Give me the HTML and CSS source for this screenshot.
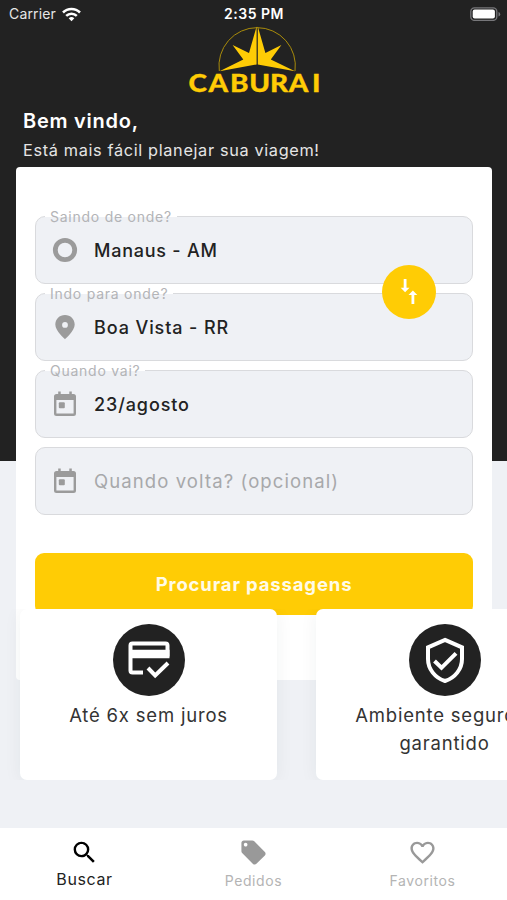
FILE: index.html
```html
<!DOCTYPE html>
<html lang="pt-BR">
<head>
<meta charset="utf-8">
<meta name="viewport" content="width=device-width, initial-scale=1">
<title>Caburai</title>
<link rel="stylesheet" href="styles.css">
</head>
<body>
<div class="app">
  <header class="hero">
    <div class="status">
      <div class="carrier"><span>Carrier</span>
        <svg width="19" height="15" viewBox="0 0 19 15" fill="#fff"><path d="M9.5 14.2 6.7 11.3a4 4 0 0 1 5.600 0z"/><g fill="none" stroke="#fff" stroke-width="2.500"><path d="M4.200 8.900a7.500 7.500 0 0 1 10.600 0"/><path d="M1 5.500a12 12 0 0 1 17 0"/></g></svg>
      </div>
      <div class="clock">2:35 PM</div>
      <svg class="battery" width="31" height="14" viewBox="0 0 31 14"><rect x=".8" y=".8" width="26" height="12.600" rx="3.600" fill="#222" stroke="#77777a" stroke-width="1.300"/><rect x="2.700" y="2.600" width="22.200" height="9" rx="2" fill="#fff"/><path d="M28.500 5v4.400q1.700-.5 1.700-2.200T28.500 5z" fill="#77777a"/></svg>
    </div>
    <svg class="logo" width="140" height="72" viewBox="184 24 140 72">
      <path d="M219.300 71A38.200 38.200 0 1 1 295 71" fill="none" stroke="#a88b0b" stroke-width="1"/>
      <path d="M256.600 26.500 249 53 232.600 45 243.300 59.500 219.500 71.200 256.600 64.500zM257.800 26.500 265.400 53 281.400 45 270.800 59.500 295 71.200 257.800 64.500z" fill="#ffcc05"/>
      <text class="wordmark" transform="translate(188.500 91.900) scale(1.140 1)" x="0 17.600 36.300 53.400 71.500 88 108.300">CABURAI</text>
    </svg>
    <h1 class="hello">Bem vindo,</h1>
    <p class="tagline">Está mais fácil planejar sua viagem!</p>
  </header>

  <main class="content">
    <section class="search">
      <div class="field">
        <span class="label">Saindo de onde?</span>
        <svg class="icon" viewBox="0 0 28 28"><circle cx="14" cy="14" r="9.700" fill="none" stroke="#9b9b9b" stroke-width="4.800"/></svg>
        <span class="value manaus">Manaus - AM</span>
        <button class="swap" aria-label="Inverter">
          <svg width="20" height="28" viewBox="0 0 20 28" fill="#fff"><path d="M4.700 1h2.800v8.800h3L6.100 14.200 1.700 9.800h3zM12.500 26h2.800v-9h3L13.900 12.600 9.500 17h3z"/></svg>
        </button>
      </div>
      <div class="field">
        <span class="label">Indo para onde?</span>
        <svg class="icon" viewBox="0 0 28 28"><path fill="#9b9b9b" fill-rule="evenodd" d="M14 2C8.500 2 4.300 6.200 4.300 11.600c0 6.700 9.700 14.600 9.700 14.600s9.700-7.900 9.700-14.600C23.700 6.200 19.500 2 14 2zm0 7a2.900 2.900 0 1 1 0 5.800A2.900 2.900 0 0 1 14 9z"/></svg>
        <span class="value">Boa Vista - RR</span>
      </div>
      <div class="field">
        <span class="label">Quando vai?</span>
        <svg class="icon" viewBox="0 0 28 28"><path class="calendar" fill-rule="evenodd" d="M7.200 1.500h2.500V4h8.600V1.500h2.500V4H22.500A2.500 2.500 0 0 1 25 6.500v17A2.500 2.500 0 0 1 22.500 26h-17A2.500 2.500 0 0 1 3 23.500v-17A2.500 2.500 0 0 1 5.500 4h1.700zM5.400 10v13.600h17.200V10z"/><rect class="calendar" x="7.800" y="12.300" width="6" height="6" rx="1"/></svg>
        <span class="value">23/agosto</span>
      </div>
      <div class="field">
        <svg class="icon" viewBox="0 0 28 28"><path class="calendar" fill-rule="evenodd" d="M7.200 1.500h2.500V4h8.600V1.500h2.500V4H22.500A2.500 2.500 0 0 1 25 6.500v17A2.500 2.500 0 0 1 22.500 26h-17A2.500 2.500 0 0 1 3 23.500v-17A2.500 2.500 0 0 1 5.500 4h1.700zM5.400 10v13.600h17.200V10z"/><rect class="calendar" x="7.800" y="12.300" width="6" height="6" rx="1"/></svg>
        <span class="value placeholder">Quando volta? (opcional)</span>
      </div>
      <button class="submit">Procurar passagens</button>
    </section>

    <section class="benefits">
      <article class="benefit">
        <svg class="badge" viewBox="0 0 72 72"><circle cx="36" cy="36" r="36" fill="#222"/><g fill="none" stroke="#fff" stroke-width="4"><path d="M54.500 32.500V21.500q0-2-2-2H19.500q-2 0-2 2V46.500q0 2 2 2H30"/><path d="M35 44l7.200 7.500L55 39"/></g><path d="M17 25.700h39.500v8.500H17z" fill="#fff"/></svg>
        <p>Até 6x sem juros</p>
      </article>
      <article class="benefit">
        <svg class="badge" viewBox="0 0 72 72"><circle cx="36" cy="36" r="36" fill="#222"/><g fill="none" stroke="#fff" stroke-width="4"><path d="M36 15.900 53 23.300V35c0 10-7 19-17 22C26 54 19 45 19 35V23.300z"/><path d="M25.500 37l7 6.800L47 29.300"/></g></svg>
        <p>Ambiente seguro e garantido</p>
      </article>
    </section>
  </main>

  <nav class="tabs">
    <a class="tab active"><svg viewBox="0 0 24 24"><path d="M15.500 14h-.79l-.28-.27A6.470 6.470 0 0 0 16 9.500 6.500 6.500 0 1 0 9.500 16c1.610 0 3.090-.59 4.230-1.570l.27.28v.79l5 4.990L20.490 19l-4.990-5zm-6 0C7.010 14 5 11.990 5 9.500S7.010 5 9.500 5 14 7.010 14 9.500 11.990 14 9.500 14z"/></svg><span>Buscar</span></a>
    <a class="tab"><svg viewBox="0 0 24 24"><path d="M21.410 11.580l-9-9C12.050 2.220 11.550 2 11 2H4c-1.100 0-2 .9-2 2v7c0 .55.220 1.050.590 1.420l9 9c.360.360.860.580 1.410.580s1.050-.220 1.410-.590l7-7c.370-.360.590-.860.590-1.410s-.230-1.060-.590-1.420zM5.500 7C4.670 7 4 6.330 4 5.500S4.670 4 5.500 4 7 4.670 7 5.500 6.330 7 5.500 7z"/></svg><span>Pedidos</span></a>
    <a class="tab"><svg viewBox="0 0 24 24"><path d="M16.500 3c-1.740 0-3.410.81-4.500 2.090C10.910 3.810 9.240 3 7.500 3 4.420 3 2 5.420 2 8.500c0 3.780 3.400 6.860 8.550 11.540L12 21.350l1.450-1.320C18.600 15.360 22 12.280 22 8.500 22 5.420 19.580 3 16.500 3zm-4.400 15.550l-.1.100-.1-.100C7.140 14.240 4 11.390 4 8.500 4 6.500 5.500 5 7.500 5c1.540 0 3.040.99 3.570 2.360h1.870C13.460 5.990 14.960 5 16.500 5c2 0 3.500 1.500 3.500 3.500 0 2.890-3.140 5.740-7.900 10.050z"/></svg><span>Favoritos</span></a>
  </nav>
</div>
</body>
</html>
```
FILE: styles.css
```css
* { box-sizing: border-box; }
body { margin: 0; font-family: Inter, "Liberation Sans", sans-serif; background: #eff1f5; }
h1, p { margin: 0; white-space: nowrap; }
button { border: 0; padding: 0; font-family: inherit; }
svg { display: block; flex: none; }

.app { height: 900px; width: 507px; overflow: hidden; display: flex; flex-direction: column; }

.hero { height: 461px; flex: none; background: #222; color: #fff; }
.status { display: grid; grid-template-columns: 1fr auto 1fr; align-items: center; height: 24px; padding: 4px 6px 0 9px; font-size: 14px; line-height: 20px; }
.carrier { display: flex; align-items: center; gap: 6px; color: #e6e6e6; letter-spacing: .15px; }
.clock { font-weight: 600; font-size: 14px; letter-spacing: .5px; margin-right: 2px; }
.battery { justify-self: end; }
.logo { margin-left: 184px; }
.wordmark { font: 900 24.5px Lato, sans-serif; fill: #ffcc05; stroke: #ffcc05; stroke-width: .3px; stroke-linejoin: round; }
.hello { margin: 12px 0 0 23px; font-size: 20px; line-height: 26px; font-weight: 600; letter-spacing: .75px; }
.tagline { margin: 4px 0 0 23px; font-size: 16.3px; line-height: 24px; color: #e5e5e5; letter-spacing: .65px; }

.content { margin-top: -294px; flex: none; height: 661px; }
.search { margin: 0 15px 0 16px; height: 513px; padding: 49px 19px 0; border-radius: 4px; background: #fff; display: flex; flex-direction: column; gap: 9px; }
.field { position: relative; height: 68px; flex: none; border: 1px solid #d9dadd; border-radius: 10px; background: #eff1f5; display: flex; align-items: center; padding: 0 0 1px 14.5px; gap: 15.5px; }
.label { position: absolute; left: 9px; top: -9px; padding: 0 5px; font-size: 14px; line-height: 17px; color: #b3b4b7; letter-spacing: .75px; background: linear-gradient(#fff 0 9px, #eff1f5 9px); }
.icon { width: 28px; height: 28px; }
.calendar { fill: #9b9b9b; }
.value { padding-top: 2px; font-size: 18px; line-height: 24px; font-weight: 500; color: #222; letter-spacing: .9px; }
.manaus { letter-spacing: .75px; }
.placeholder { padding-top: 0; color: #a7a8aa; font-weight: 400; font-size: 18.5px; letter-spacing: 1.1px; }
.swap { position: absolute; z-index: 1; right: 36px; top: 48px; width: 54px; height: 54px; border-radius: 50%; background: #ffcc05; display: grid; place-items: center; }
.submit { height: 62px; flex: none; margin-top: 29px; padding-bottom: 1px; border-radius: 9px; background: #ffcc05; color: #fffbe8; font-size: 18.5px; font-weight: 700; letter-spacing: .85px; }

.benefits { position: relative; margin-top: -71px; padding-left: 20px; height: 171px; display: flex; gap: 39px; overflow: hidden; }
.benefit { width: 257px; flex: none; border-radius: 7px; background: #fff; box-shadow: 0 2px 18px rgba(34, 44, 56, .06); display: flex; flex-direction: column; align-items: center; padding-top: 15px; }
.badge { width: 72px; height: 72px; }
.benefit p { margin-top: 5px; width: 205px; white-space: normal; text-align: center; font-size: 18.5px; line-height: 28px; color: #333; letter-spacing: .8px; }

.tabs { height: 72px; flex: none; background: #fff; display: grid; grid-template-columns: repeat(3, 1fr); }
.tab { display: flex; flex-direction: column; align-items: center; padding: 10px 0 0; color: #b4b4b4; font-size: 14px; line-height: 20px; letter-spacing: .6px; }
.tab svg { width: 29px; height: 29px; fill: #999; }
.tab span { margin-top: 4px; }
.active { color: #222; font-size: 16px; }
.active svg { fill: #000; }
.active span { margin-top: 2px; }
```
